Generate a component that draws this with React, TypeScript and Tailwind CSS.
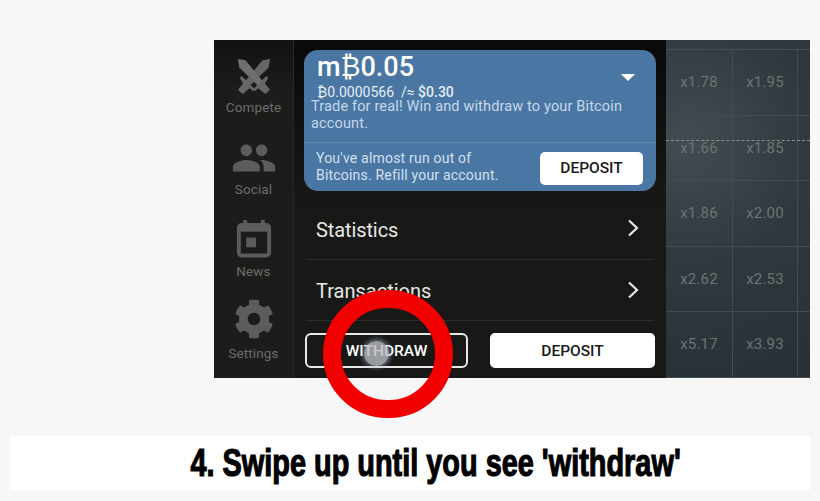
import { MdPeople } from "react-icons/md";
import { FaCog } from "react-icons/fa";

const Swords = () => (
  <svg width="40" height="36" viewBox="0 0 40 38" fill="#666765">
    <path d="M37 1 L35.5 10 L16 29 L11 24 L29 2.5 Z" />
    <path d="M3 1 L11 2.5 L29 24 L24 29 L4.5 10 Z" fill="#6f706e" />
    <path d="M5 21 L7 19 L21 33 L19 35 L15.5 32 L8 38 L3 33.5 L8.5 27 Z" />
    <path d="M35 21 L33 19 L19 33 L21 35 L24.5 32 L32 38 L37 33.5 L31.5 27 Z" />
  </svg>
);

const CalendarIcon = () => (
  <svg width="36" height="39" viewBox="0 0 36 40" fill="none">
    <rect x="2.5" y="6" width="31" height="31.5" rx="3" stroke="#5c5d5b" strokeWidth="4" />
    <rect x="2" y="6" width="32" height="7" fill="#5c5d5b" />
    <rect x="7" y="1" width="4" height="7" rx="1" fill="#5c5d5b" />
    <rect x="25" y="1" width="4" height="7" rx="1" fill="#5c5d5b" />
    <rect x="10" y="19" width="10" height="10" fill="#5c5d5b" />
  </svg>
);

const Chevron = () => (
  <svg width="13" height="18" viewBox="0 0 13 18" fill="none">
    <path d="M2 1.5 L10 9 L2 16.5" stroke="#e8e8e6" strokeWidth="2.2" />
  </svg>
);

const navItems = [
  { label: "Compete", icon: <Swords />, box: "h-[39px]", gap: "mt-[3px]" },
  { label: "Social", icon: <MdPeople size={46} color="#5c5d5b" />, box: "h-[42px]", gap: "mt-[1px]" },
  { label: "News", icon: <CalendarIcon />, box: "h-[44px] pb-[2px]", gap: "mt-[1px]" },
  { label: "Settings", icon: <FaCog size={40} color="#5c5d5b" />, box: "h-[45px] pb-[3px]", gap: "mt-[1px]" },
];

const rows = [
  ["x1.78", "x1.95"],
  ["x1.66", "x1.85"],
  ["x1.86", "x2.00"],
  ["x2.62", "x2.53"],
  ["x5.17", "x3.93"],
];

export default function App() {
  return (
    <div className="relative w-[820px] h-[501px] overflow-hidden bg-[#f7f7f7] font-['Roboto',sans-serif]">
      <div className="pt-10 pl-[214px]">
        <div className="flex w-[596px] h-[338px] bg-[#1a1b19]">
          {/* side nav */}
          <div className="w-[80px] shrink-0 border-r border-[#282926] pt-[16px] flex flex-col bg-gradient-to-b from-[#111211] to-[#1c1d1b] to-[15%]">
            {navItems.map((item) => (
              <div key={item.label} className="h-[82px] flex flex-col items-center">
                <div className={`${item.box} flex items-center justify-center`}>{item.icon}</div>
                <div className={`${item.gap} text-[13.5px] leading-[18px] tracking-[0.1px] text-[#6c6d6b]`}>{item.label}</div>
              </div>
            ))}
          </div>

          {/* account panel */}
          <div className="w-[372px] shrink-0 flex flex-col bg-gradient-to-b from-[#090a09] to-[#181917] to-[50%] pt-[10px] px-[10px]">
            <div className="w-[352px] h-[141px] rounded-[14px] bg-[#4a76a3] relative shrink-0">
              <div className="pl-[13px] pt-[1px] text-[27px] leading-[32px] font-medium text-white">m₿0.05</div>
              <div className="pl-[13px] mt-[2px] text-[14px] leading-[14px] text-[#e4ecf4]">
                ₿0.0000566 &nbsp;/≈ <span className="font-medium">$0.30</span>
              </div>
              <div className="pl-[7px] pr-[20px] text-[14.5px] leading-[17px] tracking-[0.15px] text-[#c6d8ea] -mt-[1px]">
                Trade for real! Win and withdraw to your Bitcoin account.
              </div>
              <div className="border-t border-[#6088b0] mt-[10px] pl-[12px] pr-[13px] pt-[9px] flex items-start justify-between">
                <div className="text-[14px] leading-[17px] tracking-[0.2px] text-[#d3e0ee] -mt-[2px]">
                  You've almost run out of
                  <br />
                  Bitcoins. Refill your account.
                </div>
                <button className="w-[103px] h-[33px] rounded-[5px] bg-white text-[15.5px] font-medium text-[#1a1a1a]">DEPOSIT</button>
              </div>
              <div className="absolute right-[21px] top-[24px] w-0 h-0 border-x-[7px] border-x-transparent border-t-[7px] border-t-white" />
            </div>

            <div className="h-[69px] ml-[2px] mr-[2px] pl-[10px] pr-[14px] flex items-center justify-between border-b border-[#2c2d2a] text-[20px] tracking-[-0.1px] text-[#e8e8e6]">
              <span className="pt-[10px]">Statistics</span>
              <span className="pt-[6px]">
                <Chevron />
              </span>
            </div>
            <div className="h-[61px] ml-[2px] mr-[2px] pl-[10px] pr-[14px] flex items-center justify-between border-b border-[#2c2d2a] text-[20px] text-[#e8e8e6]">
              <span className="pt-[2px]">Transactions</span>
              <Chevron />
            </div>

            <div className="flex justify-between mt-[12px] ml-[1px] mr-[1px]">
              <button className="w-[163px] h-[35px] pt-[2px] rounded-[6px] border-2 border-[#e8e8e6] text-[15.5px] font-medium text-white">WITHDRAW</button>
              <button className="w-[165px] h-[35px] pt-[2px] rounded-[5px] bg-white text-[15.5px] font-medium text-[#1a1a1a]">DEPOSIT</button>
            </div>
          </div>

          {/* multiplier grid */}
          <div className="relative w-[144px] shrink-0 bg-[radial-gradient(circle_at_15%_30%,#434c50_0%,#30393e_45%,#283036_100%)] pt-[9px]">
            <div className="border-t border-[#465054] grid grid-cols-[67px_65px_12px]">
              {rows.map((row, i) => (
                <div key={i} className="contents">
                  {row.map((v) => (
                    <div key={v} className="h-[65.5px] border-r border-b border-[#434c50] flex items-center justify-center text-[15px] tracking-[0.2px] text-[#6d7476]">
                      {v}
                    </div>
                  ))}
                  <div className="h-[65.5px] border-b border-[#434c50]" />
                </div>
              ))}
            </div>
            <div className="absolute left-0 right-0 top-[100px] border-t border-dashed border-[#8a9092]" />
          </div>
        </div>
      </div>

      {/* red highlight ring + touch marker */}
      <div className="absolute left-[323px] top-[290px] w-[130px] h-[128px] rounded-full border-[18px] border-[#f20000]" />
      <div className="absolute left-[364px] top-[341px] w-[25px] h-[25px] rounded-full bg-[#b9bcc0]/80 shadow-[0_0_4px_2px_rgba(170,180,220,0.5)]" />

      {/* caption */}
      <div className="absolute left-[10px] top-[436px] w-[800px] h-[54px] bg-white flex items-center justify-center">
        <div className="ml-[51px] font-['Liberation_Sans',sans-serif] font-bold text-[38px] text-black whitespace-nowrap [-webkit-text-stroke:1.2px_#000] scale-x-[0.76]">
          4. Swipe up until you see 'withdraw'
        </div>
      </div>
    </div>
  );
}
